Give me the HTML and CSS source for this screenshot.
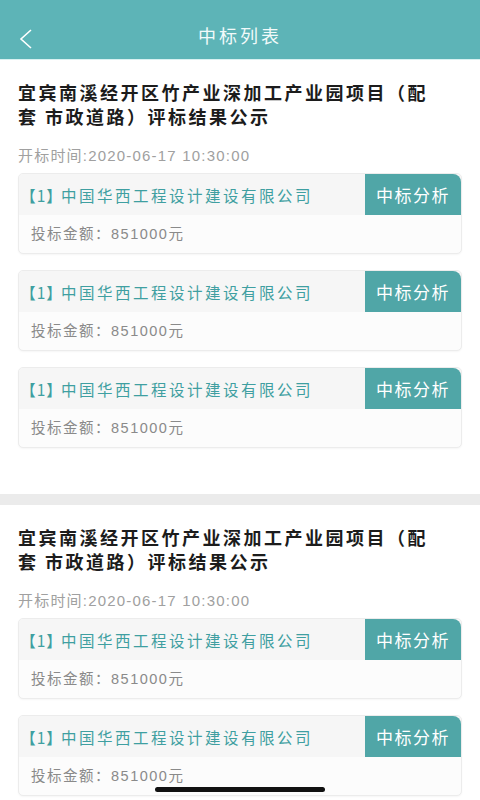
FILE: index.html
```html
<!DOCTYPE html>
<html lang="zh-CN">
<head>
    <meta charset="UTF-8">
    <title>中标列表</title>
    <link rel="stylesheet" href="styles.css">
</head>
<body>

    <!-- 顶部导航 -->
    <div class="topbar">
        <svg class="back" width="14" height="20" viewBox="0 0 14 20">
            <path d="M12 1 L2 10 L12 19" fill="none" stroke="#ffffff" stroke-width="1.6"/>
        </svg>
        <div class="topbar-title">中标列表</div>
    </div>

    <!-- 项目一 -->
    <div class="projeto">
        <h2 class="titulo">宜宾南溪经开区竹产业深加工产业园项目（配套 市政道路）评标结果公示</h2>
        <div class="data">开标时间:2020-06-17 10:30:00</div>

        <div class="cartao">
            <div class="cartao-topo">
                <span class="empresa"><span class="num">【1】</span> 中国华西工程设计建设有限公司</span>
                <span class="botao">中标分析</span>
            </div>
            <div class="valor">投标金额：851000元</div>
        </div>
        <div class="cartao">
            <div class="cartao-topo">
                <span class="empresa"><span class="num">【1】</span> 中国华西工程设计建设有限公司</span>
                <span class="botao">中标分析</span>
            </div>
            <div class="valor">投标金额：851000元</div>
        </div>
        <div class="cartao">
            <div class="cartao-topo">
                <span class="empresa"><span class="num">【1】</span> 中国华西工程设计建设有限公司</span>
                <span class="botao">中标分析</span>
            </div>
            <div class="valor">投标金额：851000元</div>
        </div>
    </div>

    <div class="separador"></div>

    <!-- 项目二 -->
    <div class="projeto">
        <h2 class="titulo">宜宾南溪经开区竹产业深加工产业园项目（配套 市政道路）评标结果公示</h2>
        <div class="data">开标时间:2020-06-17 10:30:00</div>

        <div class="cartao">
            <div class="cartao-topo">
                <span class="empresa"><span class="num">【1】</span> 中国华西工程设计建设有限公司</span>
                <span class="botao">中标分析</span>
            </div>
            <div class="valor">投标金额：851000元</div>
        </div>
        <div class="cartao">
            <div class="cartao-topo">
                <span class="empresa"><span class="num">【1】</span> 中国华西工程设计建设有限公司</span>
                <span class="botao">中标分析</span>
            </div>
            <div class="valor">投标金额：851000元</div>
        </div>
    </div>

    <div class="home-bar"></div>

</body>
</html>
```

FILE: styles.css
```css
body {
    margin: 0;
    font-family: "Liberation Sans", "Noto Sans CJK SC", sans-serif;
    background-color: #ffffff;
    color: #222222;
}

.topbar {
    position: relative;
    height: 60px;
    background-color: #5db4b7;
    border-bottom: 1px solid #d8f1f1;
    display: flex;
    align-items: flex-end;
    justify-content: center;
    box-sizing: border-box;
}

.topbar-title {
    color: #f2fafa;
    font-size: 18px;
    letter-spacing: 3px;
    line-height: 24px;
    margin-bottom: 10px;
}

.back {
    position: absolute;
    left: 19px;
    top: 29px;
}

.projeto {
    padding: 20px 18px 46px 18px;
}

.projeto + .projeto {
    padding-bottom: 0;
}

.titulo {
    margin: 0 20px 0 0;
    font-family: "Noto Sans CJK SC", sans-serif;
    font-size: 18px;
    font-weight: bold;
    line-height: 24px;
    letter-spacing: 2.5px;
    color: #1c1c1c;
}

.data {
    margin-top: 18px;
    font-size: 15px;
    line-height: 20px;
    letter-spacing: 1.2px;
    color: #a0a0a0;
}

.cartao {
    margin-top: 16px;
    border: 1px solid #ececec;
    border-radius: 5px;
    background-color: #fcfcfc;
    box-shadow: 0 1px 2px rgba(0, 0, 0, 0.04);
    overflow: hidden;
}

.data + .cartao {
    margin-top: 7px;
}

.cartao-topo {
    display: flex;
    justify-content: space-between;
    align-items: center;
    height: 41px;
    background-color: #f6f6f6;
}

.empresa {
    padding-left: 9px;
    font-family: "Noto Sans CJK SC", sans-serif;
    font-size: 15.5px;
    letter-spacing: 2.5px;
    color: #3f9fa1;
}

.num {
    font-feature-settings: "halt";
    letter-spacing: 1px;
}

.botao {
    height: 41px;
    line-height: 41px;
    width: 96px;
    text-align: center;
    background-color: #50a6a7;
    color: #ffffff;
    font-family: "Noto Sans CJK SC", sans-serif;
    font-size: 17px;
    letter-spacing: 1.5px;
    border-top-right-radius: 8px;
}

.valor {
    height: 38px;
    line-height: 38px;
    padding-left: 12px;
    font-size: 14.5px;
    letter-spacing: 1.5px;
    color: #8a8a8a;
}

.separador {
    height: 11px;
    background-color: #ebebeb;
}

.home-bar {
    position: fixed;
    left: 155px;
    bottom: 8px;
    width: 170px;
    height: 5px;
    border-radius: 3px;
    background-color: #111111;
}
```
